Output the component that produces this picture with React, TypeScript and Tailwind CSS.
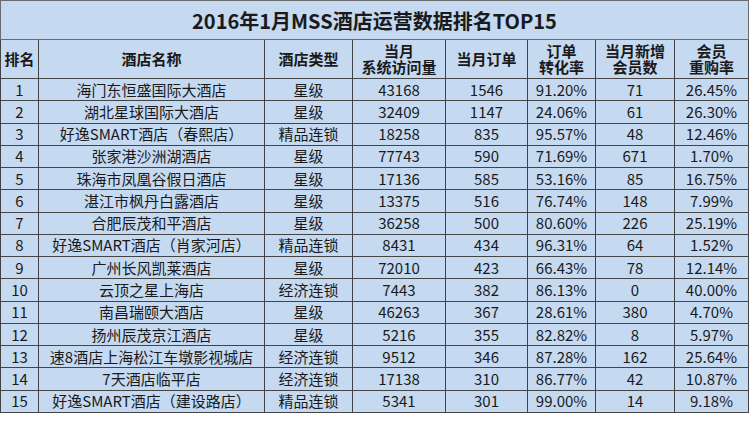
import React from "react";

const rows: [string, string, string, string, string, string, string, string][] = [
  ["1", "海门东恒盛国际大酒店", "星级", "43168", "1546", "91.20%", "71", "26.45%"],
  ["2", "湖北星球国际大酒店", "星级", "32409", "1147", "24.06%", "61", "26.30%"],
  ["3", "好逸SMART酒店（春熙店）", "精品连锁", "18258", "835", "95.57%", "48", "12.46%"],
  ["4", "张家港沙洲湖酒店", "星级", "77743", "590", "71.69%", "671", "1.70%"],
  ["5", "珠海市凤凰谷假日酒店", "星级", "17136", "585", "53.16%", "85", "16.75%"],
  ["6", "湛江市枫丹白露酒店", "星级", "13375", "516", "76.74%", "148", "7.99%"],
  ["7", "合肥辰茂和平酒店", "星级", "36258", "500", "80.60%", "226", "25.19%"],
  ["8", "好逸SMART酒店（肖家河店）", "精品连锁", "8431", "434", "96.31%", "64", "1.52%"],
  ["9", "广州长风凯莱酒店", "星级", "72010", "423", "66.43%", "78", "12.14%"],
  ["10", "云顶之星上海店", "经济连锁", "7443", "382", "86.13%", "0", "40.00%"],
  ["11", "南昌瑞颐大酒店", "星级", "46263", "367", "28.61%", "380", "4.70%"],
  ["12", "扬州辰茂京江酒店", "星级", "5216", "355", "82.82%", "8", "5.97%"],
  ["13", "速8酒店上海松江车墩影视城店", "经济连锁", "9512", "346", "87.28%", "162", "25.64%"],
  ["14", "7天酒店临平店", "经济连锁", "17138", "310", "86.77%", "42", "10.87%"],
  ["15", "好逸SMART酒店（建设路店）", "精品连锁", "5341", "301", "99.00%", "14", "9.18%"],
];

const widths = [38, 226, 88, 93, 82, 68, 79, 74];

const headers: string[][] = [
  ["排名"],
  ["酒店名称"],
  ["酒店类型"],
  ["当月", "系统访问量"],
  ["当月订单"],
  ["订单", "转化率"],
  ["当月新增", "会员数"],
  ["会员", "重购率"],
];

export default function App() {
  return (
    <div
      className="w-[750px] h-[421px] bg-white text-[#1a1a1a]"
      style={{ fontFamily: '"Noto Sans CJK SC", "Noto Sans", sans-serif' }}
    >
      <table className="border-collapse table-fixed w-[748px] bg-[#c5d9f1] border border-[#6b6b6b]">
        <colgroup>
          {widths.map((w, i) => (
            <col key={i} style={{ width: w }} />
          ))}
        </colgroup>
        <thead>
          <tr className="h-[39px]">
            <th
              colSpan={8}
              className="border border-[#6b6b6b] text-[20px] font-bold leading-none text-center align-middle pt-[1px]"
            >
              2016年1月MSS酒店运营数据排名TOP15
            </th>
          </tr>
          <tr className="h-[39px] text-[15px] font-bold">
            {headers.map((h, i) => (
              <th key={i} className="border border-[#444] font-bold p-0 align-middle">
                <div className="flex flex-col items-center">
                  {h.map((line, k) => (
                    <div key={k} className="h-[16px] leading-[16px] whitespace-nowrap">
                      {line}
                    </div>
                  ))}
                </div>
              </th>
            ))}
          </tr>
        </thead>
        <tbody className="text-[15px] leading-[20px]">
          {rows.map((r, i) => (
            <tr key={i} className="h-[22.27px]">
              {r.map((c, j) => (
                <td
                  key={j}
                  className="border border-[#444] text-center align-middle p-0 whitespace-nowrap"
                >
                  {c}
                </td>
              ))}
            </tr>
          ))}
        </tbody>
      </table>
    </div>
  );
}
